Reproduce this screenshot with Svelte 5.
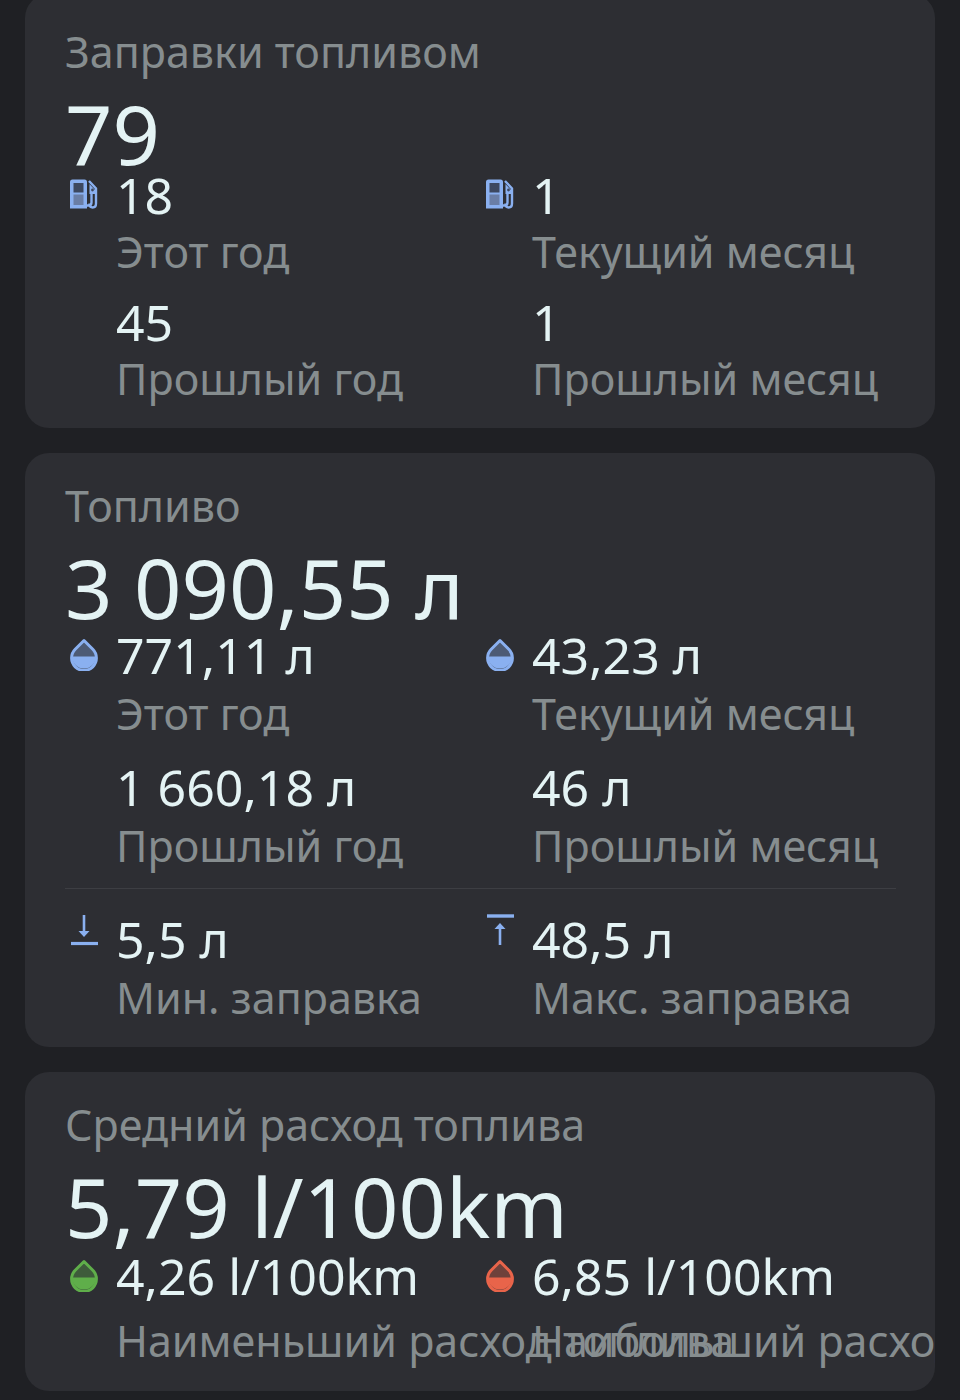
<script>
  const fuelings = [
    { value: '18', label: 'Этот год', icon: 'pump' },
    { value: '1', label: 'Текущий месяц', icon: 'pump' },
    { value: '45', label: 'Прошлый год' },
    { value: '1', label: 'Прошлый месяц' }
  ];
  const fuel = [
    { value: '771,11 л', label: 'Этот год', icon: 'drop', color: '#8ab0f0' },
    { value: '43,23 л', label: 'Текущий месяц', icon: 'drop', color: '#8ab0f0' },
    { value: '1 660,18 л', label: 'Прошлый год' },
    { value: '46 л', label: 'Прошлый месяц' }
  ];
  const extremes = [
    { value: '5,5 л', label: 'Мин. заправка', icon: 'min' },
    { value: '48,5 л', label: 'Макс. заправка', icon: 'max' }
  ];
  const consumption = [
    { value: '4,26 l/100km', label: 'Наименьший расход топлива', icon: 'drop', color: '#5fae4a' },
    { value: '6,85 l/100km', label: 'Наибольший расход топлива', icon: 'drop', color: '#e8644a' }
  ];
</script>

{#snippet stat(item)}
  <div class="stat">
    <div class="icon" class:raised={item.icon === 'min' || item.icon === 'max'}>
      {#if item.icon === 'pump'}
        <svg width="28" height="30" viewBox="0 0 28 30">
          <path d="M0 3a2.500 2.500 0 0 1 2.500-2.500h12a2.500 2.500 0 0 1 2.500 2.500v26.500H0z" fill="#8ab0f0" />
          <path d="M3.500 4h10v9.500h-10z" fill="#3d4860" />
          <path d="M3.500 15.500h10V26h-10z" fill="#6a7ea6" />
          <path d="M17 26.500h1.500c2 0 3-1 3-3V15M19 2l7 7.500v15c0 2.500-1.300 4-3.300 4s-3.200-1.500-3.200-4" fill="none" stroke="#8ab0f0" stroke-width="2.400" />
          <path d="M19.500 5l5.500 6v4h-5.500z" fill="#8ab0f0" />
          <circle cx="22.500" cy="11" r="1.400" fill="#3d4860" />
        </svg>
      {:else if item.icon === 'drop'}
        <svg width="28" height="33" viewBox="0 0 28 33">
          <path d="M14 2.500 L22.800 11.300 A12.400 12.400 0 1 1 5.200 11.300 Z" fill={item.color} fill-opacity=".35" stroke={item.color} stroke-width="3" stroke-linejoin="round" />
          <path d="M2 18.500h24a12 12 0 0 1-24 0z" fill={item.color} />
        </svg>
      {:else if item.icon === 'min'}
        <svg width="28" height="32" viewBox="0 0 28 32">
          <path d="M14 1v16" stroke="#8ab0f0" stroke-width="2.600" />
          <path d="M8.500 17h11l-5.500 6z" fill="#8ab0f0" />
          <path d="M1 29.500h27" stroke="#8ab0f0" stroke-width="3.200" />
        </svg>
      {:else if item.icon === 'max'}
        <svg width="28" height="32" viewBox="0 0 28 32">
          <path d="M1 2h27" stroke="#8ab0f0" stroke-width="3.400" />
          <path d="M14 14v17" stroke="#8ab0f0" stroke-width="2.600" />
          <path d="M8.500 15h11l-5.500-6z" fill="#8ab0f0" />
        </svg>
      {/if}
    </div>
    <div class="text">
      <div class="value">{item.value}</div>
      <div class="label">{item.label}</div>
    </div>
  </div>
{/snippet}

<main class="page">
  <section class="card first">
    <h2>Заправки топливом</h2>
    <div class="total">79</div>
    <div class="grid">
      {#each fuelings as item}
        {@render stat(item)}
      {/each}
    </div>
  </section>

  <section class="card fuel">
    <h2>Топливо</h2>
    <div class="total">3 090,55 л</div>
    <div class="grid">
      {#each fuel as item}
        {@render stat(item)}
      {/each}
    </div>
    <hr />
    <div class="grid">
      {#each extremes as item}
        {@render stat(item)}
      {/each}
    </div>
  </section>

  <section class="card last">
    <h2>Средний расход топлива</h2>
    <div class="total">5,79 l/100km</div>
    <div class="grid">
      {#each consumption as item}
        {@render stat(item)}
      {/each}
    </div>
  </section>
</main>

<style>
  :global(body) {
    background: #1f2024;
    font-family: "Noto Sans", "Open Sans", sans-serif;
  }

  .page {
    display: flex;
    flex-direction: column;
    gap: 25px;
    height: 1400px;
    box-sizing: border-box;
    padding: 0 25px;
    overflow: hidden;
  }

  .card {
    background: #2d2e33;
    border-radius: 24px;
    padding: 25px 39px 21px 40px;
    overflow: hidden;
  }

  .first {
    margin-top: -6px;
    padding-top: 30px;
  }

  h2 {
    margin: 0 0 20px;
    font-size: 43px;
    line-height: 56px;
    font-weight: 400;
    color: #868d8f;
  }

  .total {
    font-size: 83px;
    line-height: 66px;
    color: #e4f3f4;
  }

  .grid {
    display: grid;
    grid-template-columns: 416px 416px;
    row-gap: 13px;
  }

  .stat {
    display: flex;
    min-width: 0;
  }

  .icon {
    flex: none;
    width: 51px;
    height: 56px;
    padding-left: 5px;
    box-sizing: border-box;
    display: flex;
    align-items: center;
  }

  .raised {
    margin-top: -8px;
  }

  .text {
    min-width: 0;
    white-space: nowrap;
  }

  .value {
    font-size: 50px;
    line-height: 58px;
    color: #e4f3f4;
  }

  .label {
    font-size: 43px;
    line-height: 56px;
    color: #868d8f;
  }

  .fuel .total {
    margin-bottom: 6px;
  }

  .fuel .grid {
    row-gap: 16px;
  }

  .fuel .label {
    margin-top: 2px;
  }

  .last {
    padding-bottom: 14px;
  }

  .last .total {
    margin-bottom: 8px;
  }

  .last .label {
    line-height: 72px;
  }

  hr {
    margin: 14px 0 21px;
    border: 0;
    border-top: 1px solid #3d3e43;
  }
</style>
